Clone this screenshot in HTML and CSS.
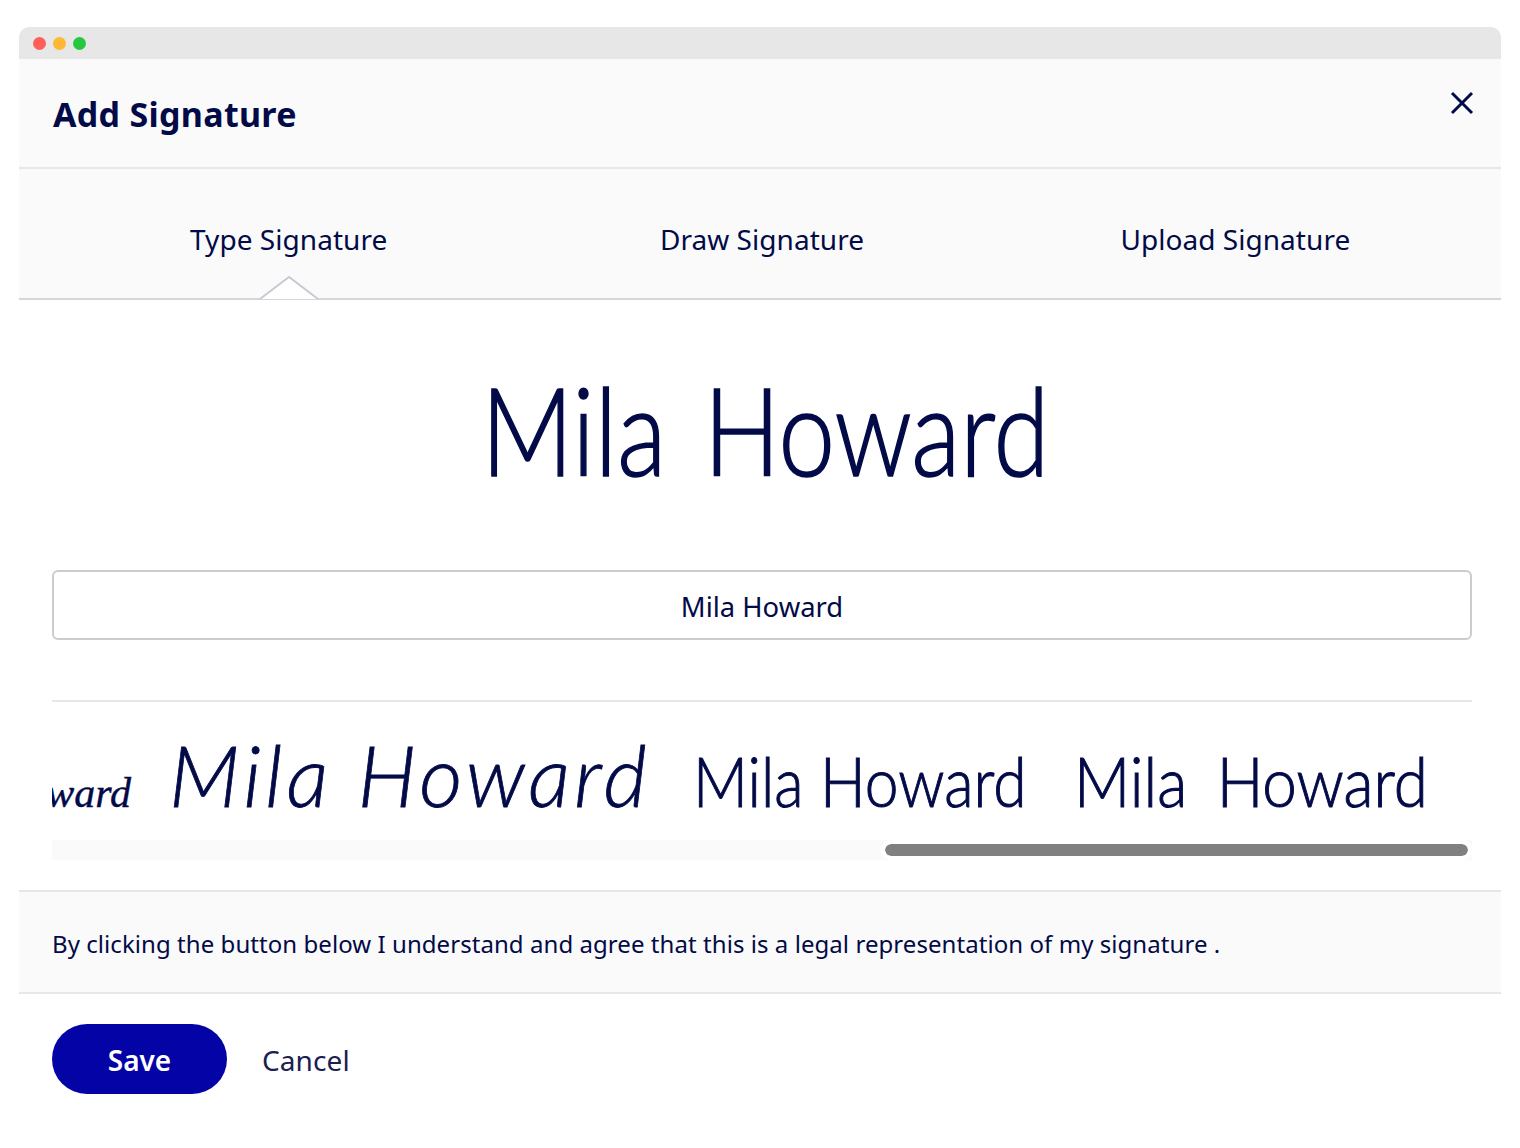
FILE: index.html
```html
<!DOCTYPE html>
<html lang="en">
<head>
  <meta charset="UTF-8" />
  <title>Add Signature</title>
  <link rel="stylesheet" href="styles.css">
</head>
<body>
  <div class="window">
    <div class="titlebar">
      <span class="dot dot-red"></span>
      <span class="dot dot-yellow"></span>
      <span class="dot dot-green"></span>
    </div>

    <div class="header">
      <h1 class="title">Add Signature</h1>
      <svg class="close" width="24" height="24" viewBox="0 0 24 24">
        <path d="M2 2 L22 22 M22 2 L2 22" />
      </svg>
    </div>

    <div class="tabs">
      <div class="tab active">
        Type Signature
        <svg class="tab-arrow" width="60" height="24" viewBox="0 0 60 24">
          <path class="tab-arrow-fill" d="M1 23 L30 1 L59 23 Z" />
          <path class="tab-arrow-line" d="M1 23 L30 1 L59 23" />
        </svg>
      </div>
      <div class="tab">Draw Signature</div>
      <div class="tab">Upload Signature</div>
    </div>

    <div class="body">
      <div class="preview"><span class="preview-text">Mila Howard</span></div>
      <input class="name-input" type="text" value="Mila Howard">
      <div class="options">
        <div class="option-strip">
          <div class="option option-a"><span>Mila Howard</span></div>
          <div class="option option-b"><span>Mila Howard</span></div>
          <div class="option option-c"><span>Mila Howard</span></div>
          <div class="option option-d"><span>Mila Howard</span></div>
        </div>
        <div class="scroll-track"><div class="scroll-thumb"></div></div>
      </div>
    </div>

    <div class="legal">By clicking the button below I understand and agree that this is a legal representation of my signature .</div>

    <div class="footer">
      <button class="save">Save</button>
      <span class="cancel">Cancel</span>
    </div>
  </div>
</body>
</html>
```

FILE: styles.css
```css
html, body {
  margin: 0;
  padding: 0;
  background-color: white;
}

body {
  padding: 27px 19px 0;
  font-family: "Noto Sans", sans-serif;
  color: #020a47;
}

.window {
  width: 1482px;
}

.titlebar {
  display: flex;
  align-items: center;
  gap: 7px;
  height: 32px;
  padding-left: 14px;
  background-color: #e7e7e7;
  border-radius: 10px 10px 0 0;
}

.dot {
  width: 13px;
  height: 13px;
  border-radius: 50%;
}

.dot-red { background-color: #ff5f57; }
.dot-yellow { background-color: #ffb833; }
.dot-green { background-color: #27c840; }

.header {
  display: flex;
  justify-content: space-between;
  height: 108px;
  background-color: #fafafa;
  border-bottom: 2px solid #e7e7e7;
}

.title {
  margin: 32px 0 0 34px;
  font-size: 34px;
  line-height: 46px;
  font-weight: 700;
  letter-spacing: 0.3px;
}

.close {
  margin: 32px 27px 0 0;
}

.close path {
  fill: none;
  stroke: #020a47;
  stroke-width: 3;
}

.tabs {
  display: grid;
  grid-template-columns: repeat(3, 1fr);
  height: 129px;
  padding: 0 29px 0 33px;
  background-color: #fafafa;
  border-bottom: 2px solid #d5d5dc;
}

.tab {
  position: relative;
  padding-top: 51px;
  text-align: center;
  font-size: 28px;
  line-height: 38px;
  letter-spacing: 0.05px;
}

.tab-arrow {
  position: absolute;
  left: 50%;
  bottom: -2px;
  margin-left: -30px;
}

.tab-arrow-fill {
  fill: white;
}

.tab-arrow-line {
  fill: none;
  stroke: #c9c9d2;
  stroke-width: 2;
}

.body {
  display: flex;
  flex-direction: column;
  height: 590px;
  padding: 0 29px 0 33px;
}

.preview {
  display: flex;
  justify-content: center;
  align-items: center;
  height: 258px;
  padding-bottom: 12px;
  padding-left: 6px;
  font-family: Lato, "Liberation Sans", sans-serif;
  font-size: 122px;
  font-weight: 300;
  color: #020a47;
  -webkit-text-stroke: 1.6px #020a47;
}

.preview-text {
  display: inline-block;
  word-spacing: 12px;
  white-space: nowrap;
  transform: scaleX(0.83);
}

.name-input {
  box-sizing: border-box;
  width: 100%;
  height: 70px;
  padding-top: 4px;
  border: 2px solid #cccccc;
  border-radius: 6px;
  background-color: white;
  font-family: "Noto Sans", sans-serif;
  font-size: 27.4px;
  color: #020a47;
  text-align: center;
}

.options {
  margin-top: 60px;
  border-top: 2px solid #e7e7e7;
}

.option-strip {
  display: flex;
  justify-content: flex-end;
  align-items: baseline;
  gap: 47px;
  height: 138px;
  padding-right: 42px;
  overflow: hidden;
  white-space: nowrap;
}

.option {
  flex-shrink: 0;
  padding-top: 22px;
}

.option span {
  display: inline-block;
  transform-origin: left center;
}

.option-a {
  width: 80px;
  margin-right: -4px;
  display: flex;
  justify-content: flex-end;
  font-family: "Liberation Serif", serif;
  font-style: italic;
  font-size: 42px;
  -webkit-text-stroke: 0.4px #020a47;
}

.option-b {
  width: 474px;
  font-family: Lato, "Liberation Sans", sans-serif;
  font-style: italic;
  font-weight: 300;
  font-size: 84px;
  letter-spacing: 4px;
  -webkit-text-stroke: 0.8px #020a47;
}

.option-b span {
  margin-left: -5px;
}

.option-c, .option-d {
  font-family: Lato, "Liberation Sans", sans-serif;
  font-size: 68px;
  font-weight: 300;
  -webkit-text-stroke: 1px #020a47;
}

.option-c { width: 335px; }
.option-d { width: 353px; }

.option-c span {
  margin-left: -2px;
  transform: scaleX(0.89);
}

.option-d span {
  margin-left: -3px;
  word-spacing: 14px;
  transform: scaleX(0.91);
}

.scroll-track {
  display: flex;
  justify-content: flex-end;
  height: 20px;
  background-color: #fafafa;
}

.scroll-thumb {
  box-sizing: border-box;
  width: 591px;
  height: 20px;
  border: 4px solid white;
  border-radius: 10px;
  background-color: #808080;
  background-clip: padding-box;
}

.legal {
  height: 100px;
  padding-left: 33px;
  background-color: #fafafa;
  border-top: 2px solid #e7e7e7;
  border-bottom: 2px solid #e7e7e7;
  font-size: 24px;
  line-height: 104px;
  letter-spacing: 0.06px;
}

.footer {
  display: flex;
  align-items: center;
  gap: 35px;
  padding: 30px 0 54px 33px;
}

.save {
  width: 175px;
  height: 70px;
  padding-top: 2px;
  border: none;
  border-radius: 35px;
  background-color: #0303a6;
  color: white;
  font-family: "Noto Sans", sans-serif;
  font-size: 28px;
  font-weight: 600;
}

.cancel {
  padding-top: 2px;
  font-size: 28px;
  letter-spacing: 0.1px;
  color: #1a2050;
}
```
